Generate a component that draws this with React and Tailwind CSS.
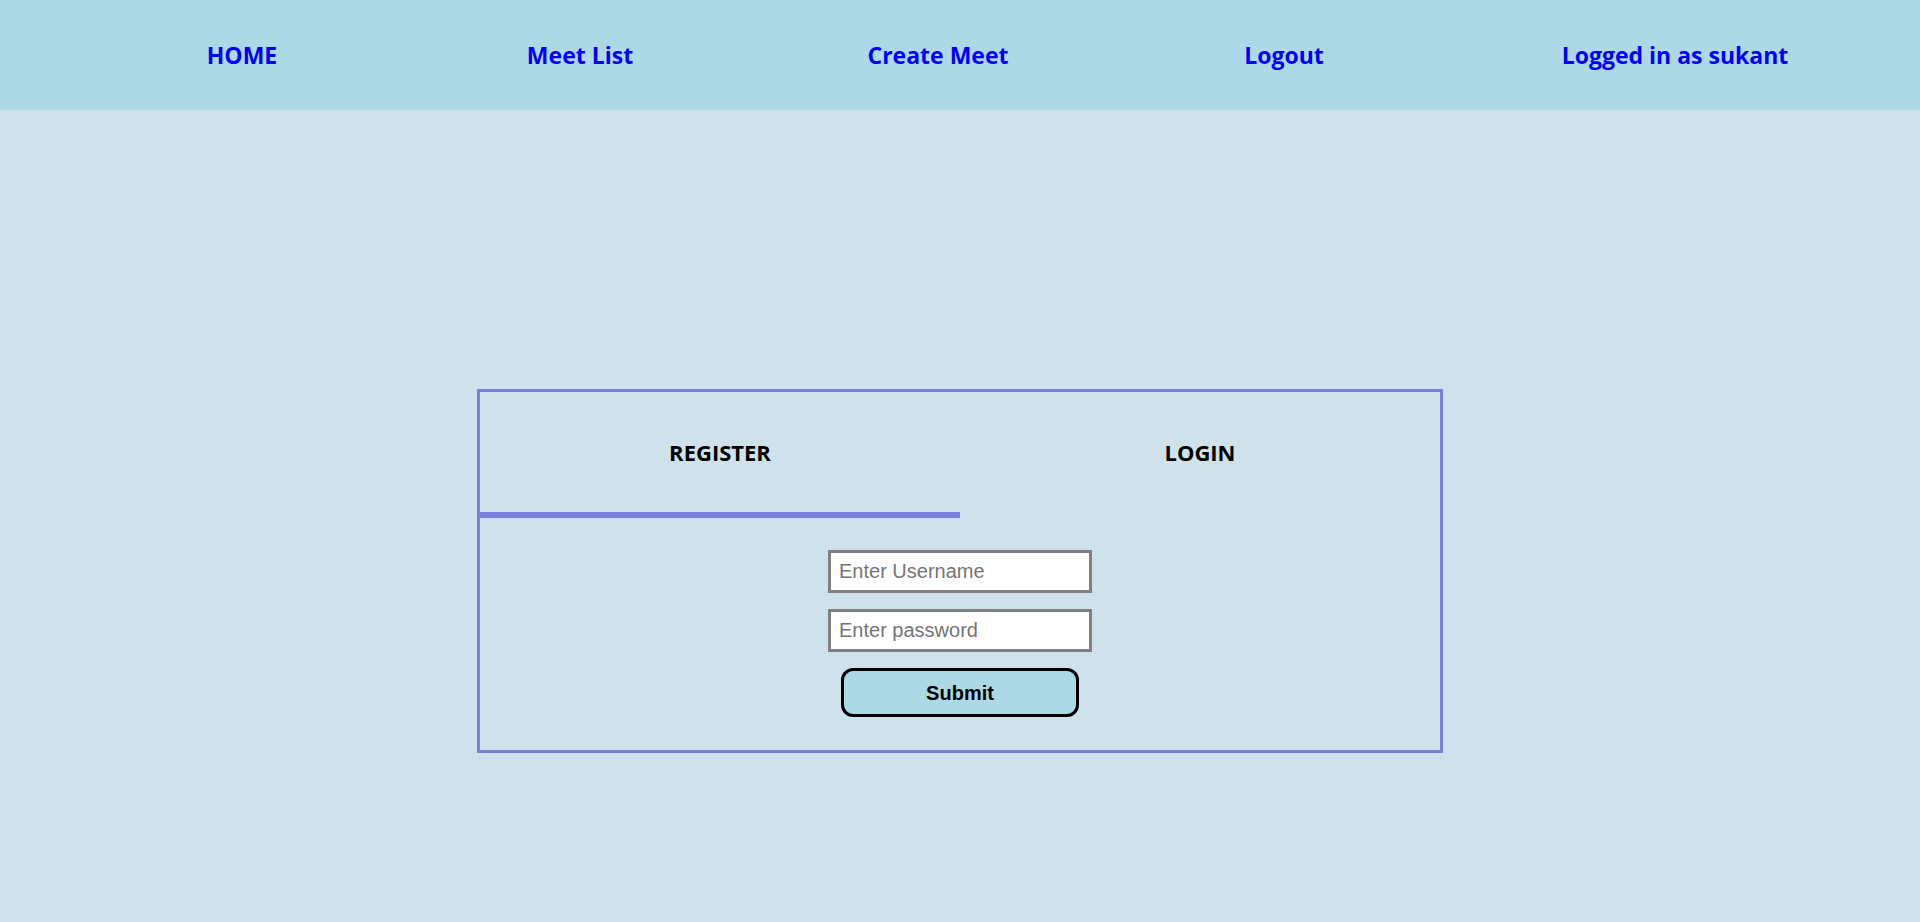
import { useState } from 'react';

const NAV_ITEMS = [
  { label: 'HOME', ml: 'ml-[92px]' },
  { label: 'Meet List', ml: 'ml-[38px]' },
  { label: 'Create Meet', ml: 'ml-[58px]' },
  { label: 'Logout', ml: 'ml-[46px]' },
  { label: 'Logged in as sukant', ml: 'ml-[91px]' },
];

const Navbar = () => (
  <nav className="flex h-[110px] items-center bg-[#add8e6]">
    {NAV_ITEMS.map((item) => (
      <a
        key={item.label}
        className={`${item.ml} block w-[300px] text-center text-[23px] font-bold text-[#0000ff]`}
        style={{ fontFamily: '"Open Sans", "Noto Sans", sans-serif' }}
      >
        {item.label}
      </a>
    ))}
  </nav>
);

const AuthCard = () => {
  const [tab, setTab] = useState('register');

  return (
    <div className="w-[966px] border-[3px] border-[#7a7fdd]">
      {/* tabs */}
      <div className="flex h-[120px]">
        <button
          onClick={() => setTab('register')}
          className="flex-1 text-[22px] font-bold text-black"
          style={{ fontFamily: '"Open Sans", "Noto Sans", sans-serif' }}
        >
          REGISTER
        </button>
        <button
          onClick={() => setTab('login')}
          className="flex-1 text-[22px] font-bold text-black"
          style={{ fontFamily: '"Open Sans", "Noto Sans", sans-serif' }}
        >
          LOGIN
        </button>
      </div>
      <div className="flex h-[6px]">
        <div className={`w-1/2 ${tab === 'register' ? 'bg-[#7a7fdd]' : ''}`}></div>
        <div className={`w-1/2 ${tab === 'login' ? 'bg-[#7a7fdd]' : ''}`}></div>
      </div>

      {/* form */}
      <form
        className="flex flex-col items-center pt-[32px] pb-[33px]"
        style={{ fontFamily: '"Liberation Sans", Arial, sans-serif' }}
        onSubmit={(e) => e.preventDefault()}
      >
        <input
          type="text"
          placeholder="Enter Username"
          className="h-[43px] w-[264px] border-[3px] border-[#808080] bg-white px-[8px] text-[20px] placeholder:text-[#757575] outline-none"
        />
        <input
          type="password"
          placeholder="Enter password"
          className="mt-[16px] h-[43px] w-[264px] border-[3px] border-[#808080] bg-white px-[8px] text-[20px] placeholder:text-[#757575] outline-none"
        />
        <button
          type="submit"
          className="mt-[16px] h-[49px] w-[238px] rounded-[12px] border-[3px] border-black bg-[#add8e6] text-[20px] font-bold text-black"
        >
          Submit
        </button>
      </form>
    </div>
  );
};

export default function App() {
  return (
    <div className="h-screen overflow-hidden bg-[#cfe2eb]">
      <Navbar />
      <main className="flex justify-center pt-[279px]">
        <AuthCard />
      </main>
    </div>
  );
}
